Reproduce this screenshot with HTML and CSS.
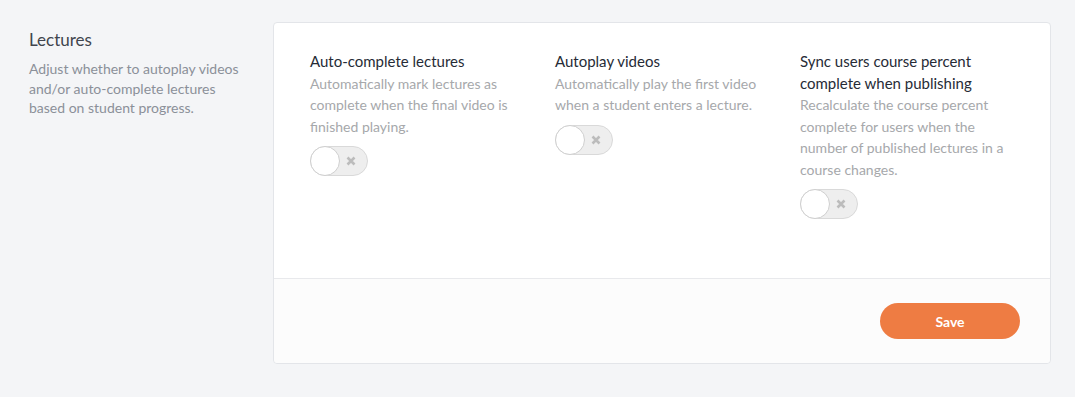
FILE: index.html
```html
<!DOCTYPE html>
<html lang="en">
<head>
  <meta charset="UTF-8" />
  <title>Lecture Settings</title>
  <link rel="stylesheet" href="styles.css">
</head>
<body>
  <div class="page">
    <!-- Section description -->
    <div class="intro">
      <h3>Lectures</h3>
      <p>Adjust whether to autoplay videos and/or auto-complete lectures based on student progress.</p>
    </div>

    <div class="card">
      <div class="options">
        <div class="option">
          <h4>Auto-complete lectures</h4>
          <p>Automatically mark lectures as complete when the final video is finished playing.</p>
          <label class="toggle">
            <span class="knob"></span>
            <svg class="off" width="10" height="10" viewBox="0 0 10 10"><path d="M1.5 1.5l7 7M8.5 1.5l-7 7"/></svg>
          </label>
        </div>
        <div class="option">
          <h4>Autoplay videos</h4>
          <p>Automatically play the first video when a student enters a lecture.</p>
          <label class="toggle">
            <span class="knob"></span>
            <svg class="off" width="10" height="10" viewBox="0 0 10 10"><path d="M1.5 1.5l7 7M8.5 1.5l-7 7"/></svg>
          </label>
        </div>
        <div class="option">
          <h4>Sync users course percent complete when publishing</h4>
          <p>Recalculate the course percent complete for users when the number of published lectures in a course changes.</p>
          <label class="toggle">
            <span class="knob"></span>
            <svg class="off" width="10" height="10" viewBox="0 0 10 10"><path d="M1.5 1.5l7 7M8.5 1.5l-7 7"/></svg>
          </label>
        </div>
      </div>

      <div class="footer">
        <button>Save</button>
      </div>
    </div>
  </div>
</body>
</html>
```

FILE: styles.css
```css
body {
  margin: 0;
  font-family: Lato, "Noto Sans", sans-serif;
  background-color: #f4f5f7;
}

.page {
  display: flex;
  gap: 22px;
  padding: 22px 24px 0 29px;
}

.intro {
  width: 222px;
  flex-shrink: 0;
}

.intro h3 {
  margin: 7px 0 9px;
  font-size: 17px;
  font-weight: normal;
  color: #41454e;
}

.intro p {
  margin: 0;
  font-size: 14px;
  line-height: 19.5px;
  color: #8b9099;
}

.card {
  flex: 1;
  background: white;
  border: 1px solid #e3e5e9;
  border-radius: 4px;
}

.options {
  display: grid;
  grid-template-columns: repeat(3, 1fr);
  column-gap: 31px;
  padding: 28px 36px 59px;
  border-bottom: 1px solid #e8e9ec;
}

.option h4 {
  margin: 0;
  font-size: 15px;
  font-weight: normal;
  line-height: 21.5px;
  color: #262b36;
}

.option p {
  margin: 0 0 9px;
  font-size: 14px;
  line-height: 21.5px;
  color: #a6a8ab;
}

.toggle {
  display: block;
  position: relative;
  width: 56px;
  height: 28px;
  background: #eeeeee;
  border: 1px solid #d9d9d9;
  border-radius: 15px;
}

.knob {
  position: absolute;
  left: -1px;
  top: -1px;
  width: 28px;
  height: 28px;
  background: white;
  border: 1px solid #cfcfcf;
  border-radius: 50%;
}

.off {
  position: absolute;
  right: 11px;
  top: 9px;
  fill: none;
  stroke: #bcbcbc;
  stroke-width: 2.6;
}

.footer {
  display: flex;
  justify-content: flex-end;
  padding: 24px 30px 24px;
  background: #fcfcfc;
  border-radius: 0 0 4px 4px;
}

button {
  width: 140px;
  height: 36px;
  background-color: #ee7c43;
  color: white;
  border: none;
  border-radius: 18px;
  font-family: inherit;
  font-size: 14px;
  font-weight: bold;
  cursor: pointer;
}
```
